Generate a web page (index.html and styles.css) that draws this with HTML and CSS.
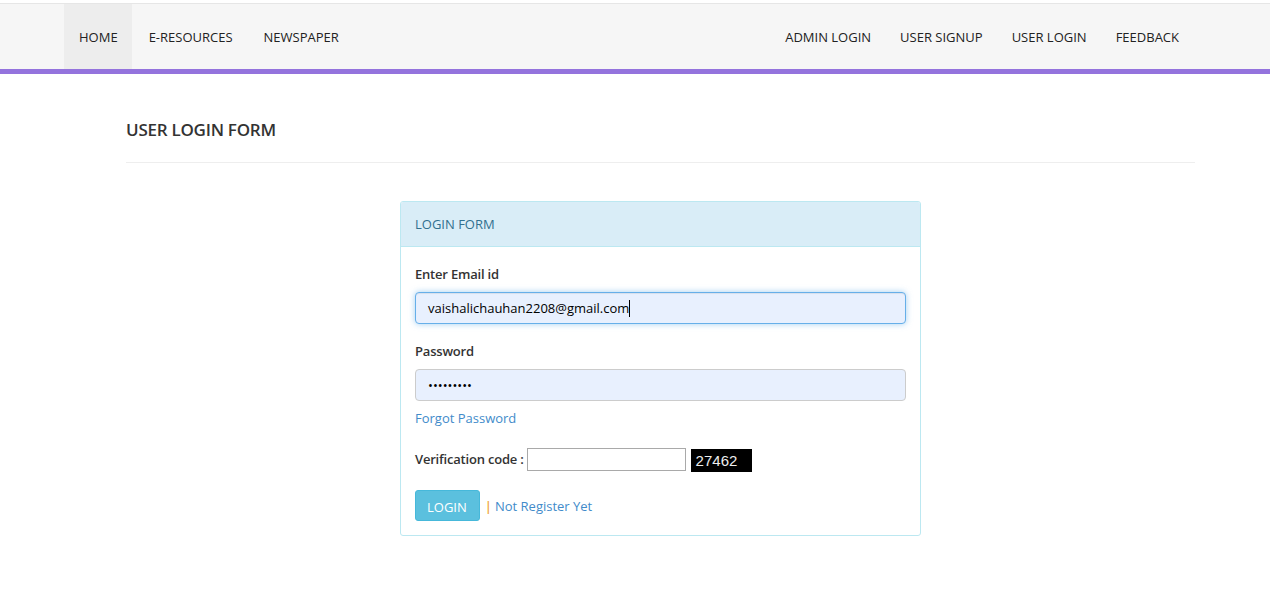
FILE: index.html
```html
<!DOCTYPE html>
<html>
<head>
<meta charset="utf-8">
<title>User Login</title>
<link rel="stylesheet" href="styles.css">
</head>
<body>
<nav class="navbar">
  <ul class="nav nav-left">
    <li class="active"><a href="#">HOME</a></li>
    <li class="eres"><a href="#">E-RESOURCES</a></li>
    <li class="news"><a href="#">NEWSPAPER</a></li>
  </ul>
  <ul class="nav nav-right">
    <li><a href="#">ADMIN LOGIN</a></li>
    <li><a href="#">USER SIGNUP</a></li>
    <li><a href="#">USER LOGIN</a></li>
    <li><a href="#">FEEDBACK</a></li>
  </ul>
</nav>
<main class="container">
  <h1 class="page-title">USER LOGIN FORM</h1>
  <section class="panel">
    <div class="panel-heading">LOGIN FORM</div>
    <form class="panel-body">
      <label class="field-label">Enter Email id</label>
      <div class="input input-focus">vaishalichauhan2208@gmail.com<span class="caret"></span></div>
      <label class="field-label second">Password</label>
      <div class="input">•••••••••</div>
      <a class="link forgot" href="#">Forgot Password</a>
      <div class="verify-row">
        <span class="field-label inline">Verification code :</span>
        <span class="code-input"></span>
        <span class="captcha">27462</span>
      </div>
      <div class="actions">
        <button type="button" class="btn-login">LOGIN</button>
        <span class="sep">|</span>
        <a class="link" href="#">Not Register Yet</a>
      </div>
    </form>
  </section>
</main>
</body>
</html>
```
FILE: styles.css
```css
* { box-sizing: border-box; }
html, body { margin: 0; padding: 0; background: #fff; }
body {
  font-family: "Open Sans", "Liberation Sans", Arial, sans-serif;
  font-size: 13px;
  color: #333;
  padding-top: 3px;
}
a { text-decoration: none; }

.navbar {
  display: flex;
  justify-content: space-between;
  background: #f6f6f6;
  border-top: 1px solid #e6e6e6;
  border-bottom: 5px solid #9473dd;
  height: 71px;
  padding: 0 77px 0 64px;
}
.nav {
  display: flex;
  list-style: none;
  margin: 0;
  padding: 0;
}
.nav li a {
  display: block;
  height: 65px;
  line-height: 67px;
  color: #222;
  font-size: 13px;
}
.nav-left li.active a { background: #ededed; padding: 0 14px 0 15px; }
.nav-left li.eres a { padding: 0 15px 0 17px; }
.nav-left li.news a { padding: 0 15px 0 16px; }
.nav-right li a { padding: 0 14px 0 15px; }

.container {
  padding: 0 75px 0 126px;
}
.page-title {
  margin: 46px 0 0;
  font-size: 17px;
  font-weight: 600;
  letter-spacing: -0.25px;
  line-height: 20px;
  color: #333;
  padding-bottom: 22px;
  border-bottom: 1px solid #eee;
}

.panel {
  width: 521px;
  margin: 38px auto 0;
  border: 1px solid #bce8f1;
  border-radius: 3px;
  background: #fff;
}
.panel-heading {
  background: #d9edf7;
  color: #31708f;
  border-bottom: 1px solid #bce8f1;
  padding: 12px 14px;
  line-height: 20px;
  height: 45px;
  border-radius: 2px 2px 0 0;
}
.panel-body {
  display: flex;
  flex-direction: column;
  align-items: flex-start;
  padding: 17px 14px 14px 14px;
  margin: 0;
}
.field-label {
  display: block;
  font-weight: 600;
  letter-spacing: -0.2px;
  line-height: 20px;
  margin-bottom: 8px;
  color: #333;
}
.field-label.second { margin-top: 17px; }
.field-label.inline { display: inline-block; margin: 0 3px 0 0; }

.input {
  width: 100%;
  height: 32px;
  line-height: 30px;
  border: 1px solid #ccc;
  border-radius: 4px;
  background: #e8f0fe;
  padding: 0 12px;
  color: #000;
  font-size: 13px;
}
.input-focus {
  border-color: #66afe9;
  box-shadow: inset 0 1px 1px rgba(0,0,0,.075), 0 0 6px rgba(102,175,233,.6);
}
.caret {
  display: inline-block;
  width: 1px;
  height: 17px;
  background: #000;
  vertical-align: -4px;
}
.link { color: #428bca; line-height: 20px; }
.forgot { margin-top: 7px; }

.verify-row {
  display: flex;
  align-items: center;
  margin-top: 18px;
  height: 26px;
}
.code-input {
  display: inline-block;
  width: 159px;
  height: 23px;
  border: 1px solid #a9a9a9;
  background: #fff;
}
.captcha {
  display: inline-block;
  margin-left: 5px;
  margin-top: 2px;
  width: 61px;
  height: 23px;
  line-height: 23px;
  background: #000;
  color: #eee;
  font-family: "Liberation Sans", Arial, sans-serif;
  font-size: 15px;
  padding-left: 5px;
}

.actions {
  display: flex;
  align-items: center;
  margin-top: 18px;
}
.btn-login {
  height: 31px;
  padding: 2px 12px 0 11px;
  background: #5bc0de;
  border: 1px solid #46b8da;
  border-radius: 3px;
  color: #fff;
  font-family: inherit;
  font-size: 13px;
  line-height: 29px;
}
.sep { color: #eea236; font-weight: 600; margin: 0 3px 0 5px; }
```
